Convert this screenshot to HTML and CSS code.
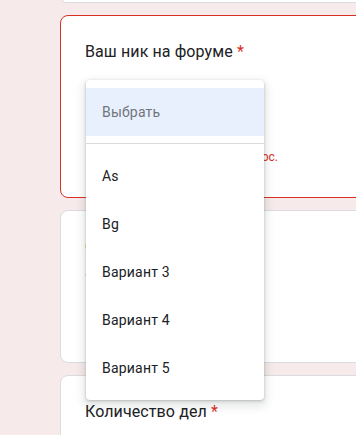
FILE: index.html
```html
<!DOCTYPE html>
<html lang="ru">
  <head>
    <meta charset="UTF-8" />
    <meta name="viewport" content="width=device-width, initial-scale=1.0" />
    <title>Форма</title>
    <link rel="stylesheet" href="styles.css">
  </head>
  <body>
    <div class="form">
      <div class="card card-stub"></div>

      <div class="card card-error">
        <div class="question-title">Ваш ник на форуме <span class="req">*</span></div>
        <div class="select-box"></div>
        <div class="error-row">
          <span class="error-icon">!</span>
          <span class="error-text">Это обязательный вопрос.</span>
        </div>

        <div class="menu">
          <div class="menu-item placeholder">Выбрать</div>
          <div class="menu-divider"></div>
          <div class="menu-item">As</div>
          <div class="menu-item">Bg</div>
          <div class="menu-item">Вариант 3</div>
          <div class="menu-item">Вариант 4</div>
          <div class="menu-item">Вариант 5</div>
        </div>
      </div>

      <div class="card card-plain">
        <div class="question-title">Сколько вам лет <span class="req">*</span></div>
        <div class="question-desc">Укажите полных лет</div>
      </div>

      <div class="card card-plain">
        <div class="question-title">Количество дел <span class="req">*</span></div>
      </div>
    </div>
  </body>
</html>
```

FILE: styles.css
```css
body {
  font-family: Roboto, "Noto Sans", Arial, sans-serif;
  margin: 0;
  padding: 0;
  background-color: #f6eaea;
  color: #202124;
  overflow: hidden;
}

.form {
  display: flex;
  flex-direction: column;
  gap: 12px;
  width: 640px;
  margin-left: 60px;
}

.card {
  background-color: #ffffff;
  border: 1px solid #dadce0;
  border-radius: 8px;
  box-sizing: border-box;
  position: relative;
}

.card-stub {
  height: 3px;
  border-top: none;
  border-radius: 0 0 8px 8px;
  margin-left: 2px;
}

.card-error {
  height: 183px;
  border-color: #d93025;
  padding: 24px 24px 0 24px;
}

.card-plain {
  height: 153px;
  padding: 24px;
}

.question-title {
  font-size: 16px;
  line-height: 24px;
  letter-spacing: 0.1px;
  color: #202124;
}

.req {
  color: #d93025;
}

.question-desc {
  margin-top: 10px;
  font-size: 12px;
  line-height: 20px;
  color: #70757a;
}

.select-box {
  height: 48px;
  margin-top: 16px;
}

.error-row {
  display: flex;
  align-items: center;
  gap: 10px;
  margin-top: 22px;
  margin-left: 18px;
  color: #d93025;
  font-size: 12px;
}

.error-icon {
  width: 14px;
  height: 14px;
  border-radius: 50%;
  background-color: #d93025;
  color: #ffffff;
  font-size: 10px;
  font-weight: bold;
  text-align: center;
  line-height: 14px;
}

.menu {
  position: absolute;
  top: 64px;
  left: 25px;
  width: 178px;
  padding: 8px 0;
  background-color: #ffffff;
  border-radius: 4px;
  box-shadow: 0 1px 3px rgba(60, 64, 67, 0.3), 0 4px 8px 3px rgba(60, 64, 67, 0.12);
  z-index: 2;
}

.menu-item {
  height: 48px;
  display: flex;
  align-items: center;
  padding-left: 16px;
  font-size: 14px;
  letter-spacing: 0.2px;
  color: #202124;
}

.menu-item.placeholder {
  background-color: #e8f0fe;
  color: #70757a;
}

.menu-divider {
  height: 1px;
  margin: 7px 0 8px 0;
  background-color: #dadce0;
}
```
